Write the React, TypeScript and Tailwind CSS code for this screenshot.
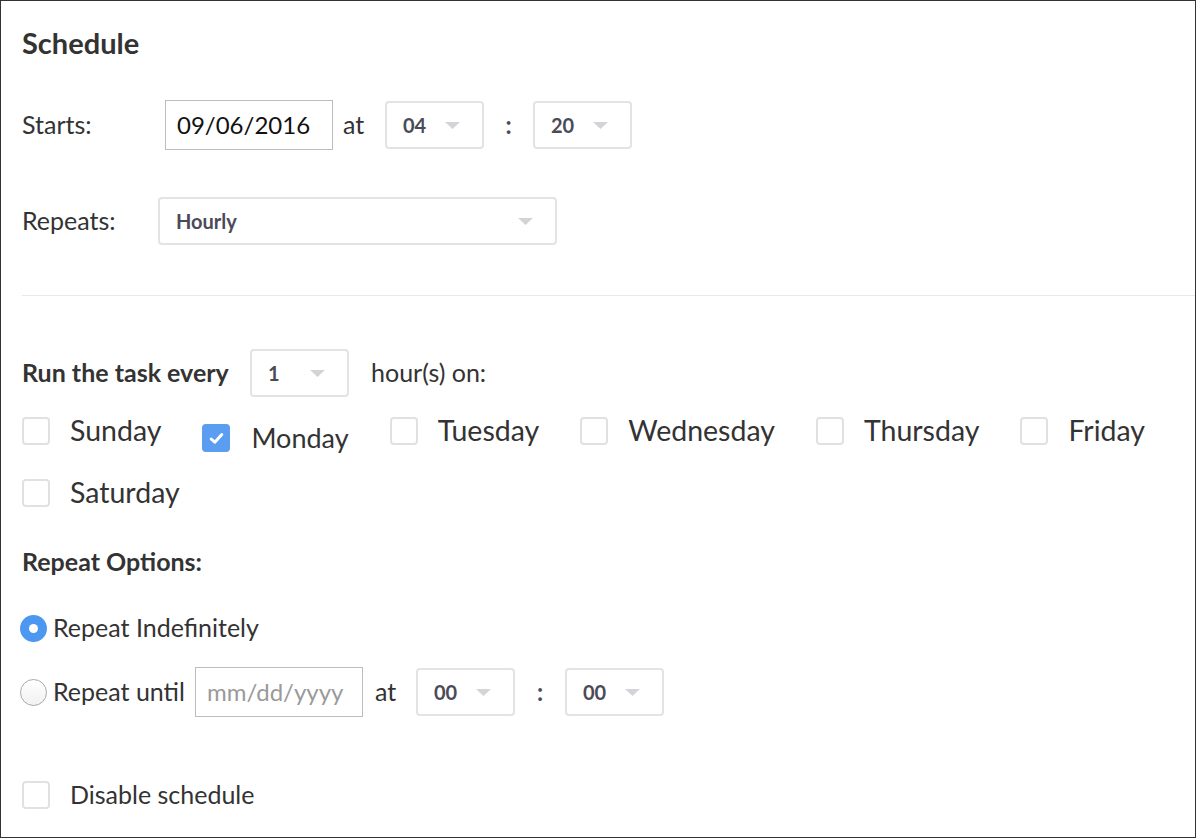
import React from "react";

const days = [
  { name: "Sunday", checked: false },
  { name: "Monday", checked: true },
  { name: "Tuesday", checked: false },
  { name: "Wednesday", checked: false },
  { name: "Thursday", checked: false },
  { name: "Friday", checked: false },
  { name: "Saturday", checked: false },
];

function Caret() {
  return (
    <svg width="15" height="7" viewBox="0 0 15 7" className="shrink-0">
      <path d="M0 0 L15 0 L7.5 7 Z" fill="#d3d3d8" />
    </svg>
  );
}

function Select({ value, width }: { value: string; width: string }) {
  return (
    <div
      className={`flex items-center justify-between h-[48px] ${width} pl-[16px] pr-[22px] border-2 border-[#e3e3e6] rounded-[4px] bg-white`}
    >
      <span className="text-[20px] font-bold text-[#4b4b58] leading-none">{value}</span>
      <Caret />
    </div>
  );
}

function DateInput({ value, placeholder, width }: { value?: string; placeholder?: string; width: string }) {
  return (
    <div className={`flex items-center h-[50px] ${width} px-[11px] border border-[#bdbdbd] bg-white`}>
      {value ? (
        <span className="text-[24px] text-[#111] leading-none">{value}</span>
      ) : (
        <span className="text-[24px] text-[#9a9a9a] leading-none">{placeholder}</span>
      )}
    </div>
  );
}

function Checkbox({ checked }: { checked?: boolean }) {
  if (checked) {
    return (
      <div className="w-[28px] h-[28px] rounded-[4px] bg-[#5b9df0] flex items-center justify-center shrink-0">
        <svg width="15" height="13" viewBox="0 0 15 13">
          <path d="M2.2 7 L5.8 10.2 L12.8 2.6" stroke="white" strokeWidth="3" fill="none" strokeLinecap="round" strokeLinejoin="round" />
        </svg>
      </div>
    );
  }
  return <div className="w-[28px] h-[28px] rounded-[4px] border-2 border-[#e1e1e4] bg-white shrink-0" />;
}

function Radio({ checked }: { checked?: boolean }) {
  if (checked) {
    return (
      <div className="w-[27px] h-[27px] rounded-full bg-[#4c98f0] flex items-center justify-center shrink-0">
        <div className="w-[9px] h-[9px] rounded-full bg-white" />
      </div>
    );
  }
  return (
    <div className="w-[27px] h-[27px] rounded-full border border-[#a9a9a9] bg-gradient-to-b from-white to-[#f1f1f1] shrink-0" />
  );
}

export default function App() {
  return (
    <div
      className="w-[1196px] h-[838px] border border-[#333] bg-white overflow-hidden text-[#333]"
      style={{ fontFamily: "Lato, 'Open Sans', sans-serif" }}
    >
      <div className="flex flex-col pl-[21px] pt-[27px]">
        {/* Heading */}
        <div className="h-[28px] flex items-center">
          <h1 className="text-[29px] font-bold leading-none">Schedule</h1>
        </div>

        {/* Starts */}
        <div className="mt-[44px] h-[50px] flex items-center">
          <span className="text-[25px] w-[143px]">Starts:</span>
          <DateInput value="09/06/2016" width="w-[168px]" />
          <span className="text-[25px] ml-[10px] w-[42px]">at</span>
          <Select value="04" width="w-[99px]" />
          <span className="text-[24px] font-bold text-[#4b4b58] w-[49px] text-center">:</span>
          <Select value="20" width="w-[99px]" />
        </div>

        {/* Repeats */}
        <div className="mt-[47px] h-[48px] flex items-center">
          <span className="text-[25px] w-[136px]">Repeats:</span>
          <Select value="Hourly" width="w-[399px]" />
        </div>

        <div className="mt-[50px] h-px bg-[#e8e8e8]" />

        {/* Run every */}
        <div className="mt-[53px] h-[48px] flex items-center">
          <span className="text-[25px] font-bold w-[228px]">Run the task every</span>
          <Select value="1" width="w-[99px]" />
          <span className="text-[25px] ml-[22px]">hour(s) on:</span>
        </div>

        {/* Days */}
        <div className="mt-[20px] flex flex-wrap items-start gap-x-[41px] gap-y-[27px] pr-[20px]">
          {days.map((d) => (
            <div key={d.name} className={`flex items-center h-[28px] ${d.checked ? "mt-[7px]" : ""}`}>
              <Checkbox checked={d.checked} />
              <span className={`leading-none -mt-[2px] ${d.checked ? "ml-[21px] text-[27px]" : "ml-[20px] text-[28.5px]"}`}>{d.name}</span>
            </div>
          ))}
        </div>

        {/* Repeat options */}
        <div className="mt-[42px] h-[26px] flex items-center">
          <span className="text-[25px] font-bold">Repeat Options:</span>
        </div>

        <div className="mt-[39px] h-[28px] flex items-center -ml-[2px]">
          <Radio checked />
          <span className="text-[25px] ml-[6px]">Repeat Indefinitely</span>
        </div>

        <div className="mt-[25px] h-[50px] flex items-center -ml-[2px]">
          <Radio />
          <span className="text-[25px] ml-[6px] w-[142px]">Repeat until</span>
          <DateInput placeholder="mm/dd/yyyy" width="w-[168px]" />
          <span className="text-[25px] ml-[12px] w-[41px]">at</span>
          <Select value="00" width="w-[99px]" />
          <span className="text-[24px] font-bold text-[#4b4b58] w-[50px] text-center">:</span>
          <Select value="00" width="w-[99px]" />
        </div>

        {/* Disable */}
        <div className="mt-[64px] h-[28px] flex items-center">
          <Checkbox />
          <span className="ml-[20px] text-[25px]">Disable schedule</span>
        </div>
      </div>
    </div>
  );
}
